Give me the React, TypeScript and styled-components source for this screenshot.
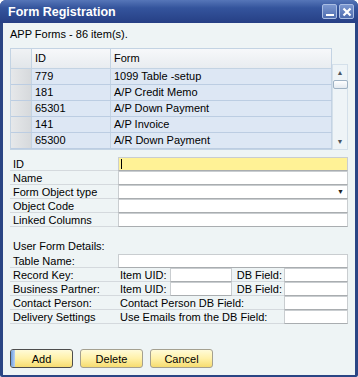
import styled, { createGlobalStyle } from "styled-components";

const GlobalStyle = createGlobalStyle`
    html, body {
        margin: 0;
        padding: 0;
        background: #ffffff;
    }
    body {
        font-family: "Liberation Sans", Arial, sans-serif;
        font-size: 11px;
        color: #000000;
    }
`;

const forms = [
    { id: "779", name: "1099 Table -setup" },
    { id: "181", name: "A/P Credit Memo" },
    { id: "65301", name: "A/P Down Payment" },
    { id: "141", name: "A/P Invoice" },
    { id: "65300", name: "A/R Down Payment" },
];

const mainFields = ["ID", "Name", "Form Object type", "Object Code", "Linked Columns"];

const App = () => {
    return (
        <>
            <GlobalStyle />
            <Window>
                <TitleBar>
                    <Title>Form Registration</Title>
                    <TitleButtons>
                        <TitleButton>
                            <svg width="10" height="10" viewBox="0 0 10 10">
                                <rect x="1" y="7" width="8" height="2" fill="#ffffff" />
                            </svg>
                        </TitleButton>
                        <TitleButton>
                            <svg width="10" height="10" viewBox="0 0 10 10">
                                <path d="M1.5 1.5 L8.5 8.5 M8.5 1.5 L1.5 8.5" stroke="#ffffff" strokeWidth="2.2" />
                            </svg>
                        </TitleButton>
                    </TitleButtons>
                </TitleBar>
                <Body>
                    <Caption>APP Forms - 86 item(s).</Caption>

                    <GridWrap>
                        <Table>
                            <HeaderRow>
                                <RowHead header />
                                <Cell header>ID</Cell>
                                <Cell header>Form</Cell>
                            </HeaderRow>
                            {forms.map((f) => (
                                <DataRow key={f.id}>
                                    <RowHead />
                                    <Cell>{f.id}</Cell>
                                    <Cell>{f.name}</Cell>
                                </DataRow>
                            ))}
                        </Table>
                        <ScrollBar>
                            <Arrow>▲</Arrow>
                            <Thumb />
                            <Track />
                            <Arrow>▼</Arrow>
                        </ScrollBar>
                    </GridWrap>

                    <FieldList top={7}>
                        {mainFields.map((label, i) => (
                            <FieldRow key={label}>
                                <Label>{label}</Label>
                                <Input active={i === 0}>
                                    {i === 0 && <Caret />}
                                    {i === 2 && <DropArrow>▼</DropArrow>}
                                </Input>
                            </FieldRow>
                        ))}
                    </FieldList>

                    <SectionTitle>User Form Details:</SectionTitle>
                    <FieldList top={0}>
                        <FieldRow>
                            <Label>Table Name:</Label>
                            <Input />
                        </FieldRow>
                        <FieldRow>
                            <Label>Record Key:</Label>
                            <SubLabel width={52}>Item UID:</SubLabel>
                            <SmallInput width={62} />
                            <SubLabel width={52} right>DB Field:</SubLabel>
                            <SmallInput width={64} />
                        </FieldRow>
                        <FieldRow>
                            <Label>Business Partner:</Label>
                            <SubLabel width={52}>Item UID:</SubLabel>
                            <SmallInput width={62} />
                            <SubLabel width={52} right>DB Field:</SubLabel>
                            <SmallInput width={64} />
                        </FieldRow>
                        <FieldRow>
                            <Label>Contact Person:</Label>
                            <SubLabel width={166}>Contact Person DB Field:</SubLabel>
                            <SmallInput width={64} />
                        </FieldRow>
                        <FieldRow>
                            <Label>Delivery Settings</Label>
                            <SubLabel width={166}>Use Emails from the DB Field:</SubLabel>
                            <SmallInput width={64} />
                        </FieldRow>
                    </FieldList>

                    <ButtonBar>
                        <Button focused>Add</Button>
                        <Button>Delete</Button>
                        <Button>Cancel</Button>
                    </ButtonBar>
                </Body>
            </Window>
        </>
    );
};

const Window = styled.div`
    width: 358px;
    height: 377px;
    display: flex;
    flex-direction: column;
    background: #2a4584;
    border-radius: 6px 6px 2px 2px;
    overflow: hidden;
`;

const TitleBar = styled.div`
    height: 23px;
    flex: none;
    display: flex;
    align-items: center;
    justify-content: space-between;
    padding: 0 4px 0 8px;
    background: linear-gradient(to bottom, #5676b8 0%, #34549c 35%, #263f85 100%);
`;

const Title = styled.div`
    color: #ffffff;
    font-family: "Liberation Sans", Arial, sans-serif;
    font-weight: bold;
    font-size: 12.5px;
`;

const TitleButtons = styled.div`
    display: flex;
    gap: 2px;
`;

const TitleButton = styled.div`
    width: 13px;
    height: 13px;
    display: flex;
    align-items: center;
    justify-content: center;
    background: linear-gradient(to bottom, #7c97cf, #4e6db0);
    border: 1px solid #a9bde3;
    border-radius: 2px;
`;

const Body = styled.div`
    flex: 1;
    margin: 0 3px 2px 3px;
    background: #eef4f5;
    padding: 0 7px;
    display: flex;
    flex-direction: column;
`;

const Caption = styled.div`
    height: 17px;
    line-height: 17px;
    margin-top: 3px;
`;

const GridWrap = styled.div`
    margin-top: 5px;
    display: flex;
    width: 338px;
`;

const Table = styled.div`
    width: 322px;
    border: 1px solid #c3d3e3;
    border-right: none;
    box-sizing: border-box;
`;

const HeaderRow = styled.div`
    display: grid;
    grid-template-columns: 21px 79px 1fr;
    height: 19px;
    background: linear-gradient(to bottom, #f7f8fa, #e8ecf0);
    border-bottom: 1px solid #c3d3e3;
`;

const DataRow = styled.div`
    display: grid;
    grid-template-columns: 21px 79px 1fr;
    height: 15px;
    background: #dde7f4;
    border-bottom: 1px solid #bccde2;
`;

const RowHead = styled.div<{ header?: boolean }>`
    background: ${(p) => (p.header ? "linear-gradient(to bottom, #f0f2f4, #e2e6ea)" : "linear-gradient(to right, #e6e8ea, #d6d9dc)")};
    border-right: 1px solid #c3d3e3;
`;

const Cell = styled.div<{ header?: boolean }>`
    padding-left: 3px;
    line-height: ${(p) => (p.header ? "19px" : "15px")};
    border-right: 1px solid #c3d3e3;
    white-space: nowrap;
    overflow: hidden;
`;

const ScrollBar = styled.div`
    margin-top: 16px;
    width: 16px;
    height: 86px;
    display: flex;
    flex-direction: column;
    align-items: center;
    background: #eef4f7;
    border: 1px solid #d4e0ea;
    box-sizing: border-box;
`;

const Arrow = styled.div`
    height: 15px;
    line-height: 15px;
    font-size: 7px;
    color: #4b5560;
`;

const Thumb = styled.div`
    width: 13px;
    height: 7px;
    border: 1px solid #9fb2c4;
    border-radius: 2px;
    background: linear-gradient(to bottom, #ffffff, #e4eaf0);
`;

const Track = styled.div`
    flex: 1;
`;

const FieldList = styled.div<{ top: number }>`
    margin-top: ${(p) => p.top}px;
    display: flex;
    flex-direction: column;
`;

const FieldRow = styled.div`
    display: flex;
    height: 14px;
`;

const Label = styled.div`
    width: 108px;
    padding-left: 3px;
    line-height: 14px;
    border-bottom: 1px solid #d4d9dd;
    box-sizing: border-box;
    white-space: nowrap;
`;

const SubLabel = styled.div<{ width: number; right?: boolean }>`
    width: ${(p) => p.width}px;
    padding: 0 2px;
    text-align: ${(p) => (p.right ? "right" : "left")};
    line-height: 14px;
    border-bottom: 1px solid #d4d9dd;
    box-sizing: border-box;
    white-space: nowrap;
`;

const Input = styled.div<{ active?: boolean }>`
    position: relative;
    width: 230px;
    height: 14px;
    box-sizing: border-box;
    background: ${(p) => (p.active ? "#fff296" : "#ffffff")};
    border: 1px solid #c9cdd0;
    border-bottom: 1px solid #a9adb0;
`;

const SmallInput = styled.div<{ width: number }>`
    width: ${(p) => p.width}px;
    height: 14px;
    box-sizing: border-box;
    background: #ffffff;
    border: 1px solid #c9cdd0;
    border-bottom: 1px solid #a9adb0;
`;

const Caret = styled.div`
    position: absolute;
    left: 2px;
    top: 1px;
    width: 1px;
    height: 10px;
    background: #000000;
`;

const DropArrow = styled.div`
    position: absolute;
    right: 3px;
    top: 0;
    font-size: 7px;
    line-height: 12px;
    color: #222222;
`;

const SectionTitle = styled.div`
    margin-top: 12px;
    height: 15px;
    line-height: 15px;
    padding-left: 3px;
`;

const ButtonBar = styled.div`
    margin-top: auto;
    margin-bottom: 7px;
    display: flex;
    gap: 7px;
`;

const Button = styled.div<{ focused?: boolean }>`
    position: relative;
    width: 63px;
    height: 19px;
    box-sizing: border-box;
    display: flex;
    align-items: center;
    justify-content: center;
    background: linear-gradient(to bottom, #fffbd8 0%, #fff1a8 50%, #f6dc70 100%);
    border: 1px solid ${(p) => (p.focused ? "#4d4d4d" : "#a4a090")};
    border-radius: 3px;
    overflow: hidden;
    &::before {
        content: "";
        display: ${(p) => (p.focused ? "block" : "none")};
        position: absolute;
        left: 0;
        top: 0;
        bottom: 0;
        width: 4px;
        background: linear-gradient(to right, #6f9ee0, #b9d2f2);
    }
`;

export default App;
